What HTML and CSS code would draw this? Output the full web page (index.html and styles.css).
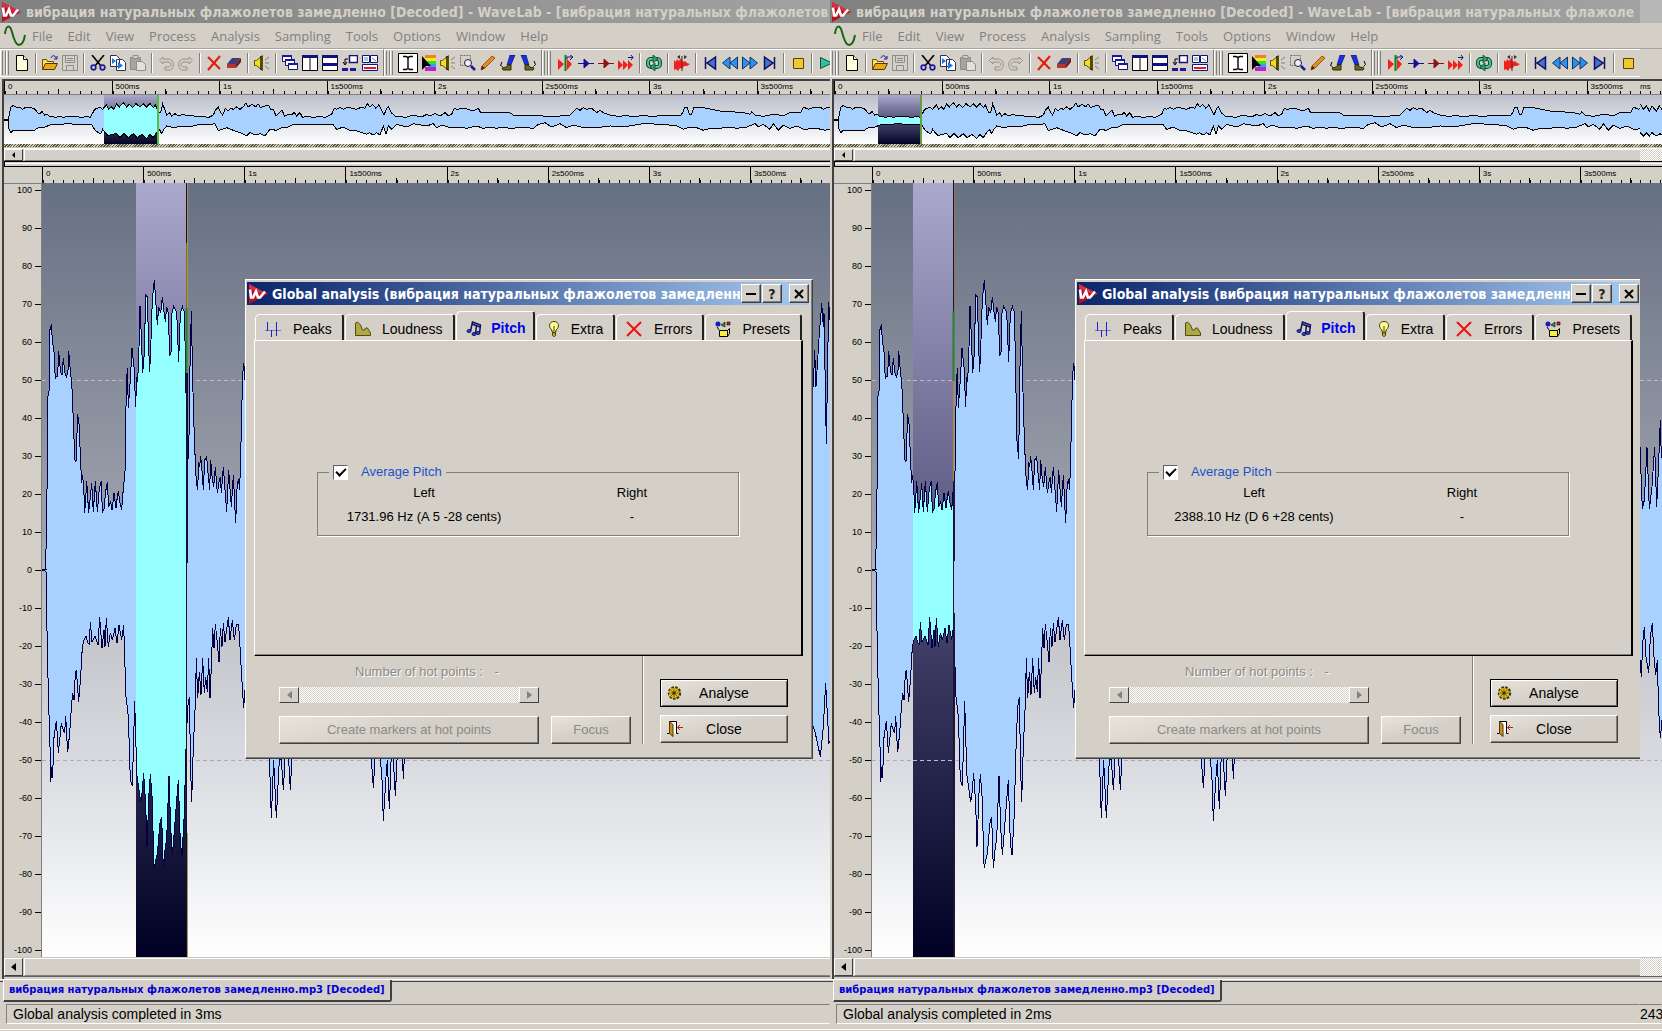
FILE: index.html
```html
<!DOCTYPE html>
<html lang="en">
<head>
<meta charset="utf-8">
<title>WaveLab - Global analysis</title>
<link rel="stylesheet" href="styles.css">
</head>
<body>
<svg class="defs" aria-hidden="true">
  <defs>
    <symbol id="logo" viewBox="0 0 20 20"><path d="M1 0 20 10 1 20z" fill="#b81020"/><path d="M1 0 20 10 14 10 1 4z" fill="#d83040"/><path d="M2 5.500l1 8h2l3-6 2 6h2l5-6" fill="none" stroke="#fff" stroke-width="2.600"/></symbol>
    <symbol id="sine" viewBox="0 0 22 22"><path d="M1 9C2 0 6-1 8 7s4 13 7 13 5-4 6-10" fill="none" stroke="#1c6410" stroke-width="2"/></symbol>
    <symbol id="new" viewBox="0 0 16 16"><path d="M2.500.5h7l4 4v11h-11z" fill="#ffffd8" stroke="#000"/><path d="M9.500.5v4h4" fill="#fff" stroke="#000"/></symbol>
    <symbol id="open" viewBox="0 0 16 16"><path d="M.5 14.500v-10h4l1 2h6v3" fill="#ffe060" stroke="#705000"/><path d="M.5 14.500l3-6h12l-3 6z" fill="#e8a818" stroke="#503800"/><path d="M9 3c1-3 4-3 5 0m1-2v3h-3" fill="none" stroke="#1010a0"/></symbol>
    <symbol id="save" viewBox="0 0 16 16"><path d="M.5.5h15v15h-15zM3.500.5v7h9v-7M4.500 15.500v-5h7v5M5 3.500h6M5 5.500h6" fill="#d4d0c8" stroke="#8c8c88"/></symbol>
    <symbol id="cut" viewBox="0 0 16 16"><path d="M2 0l9 11M14 0L5 11" stroke="#000" stroke-width="1.600"/><circle cx="3.500" cy="12.500" r="2.300" fill="none" stroke="#1818a0" stroke-width="1.700"/><circle cx="12.500" cy="12.500" r="2.300" fill="none" stroke="#1818a0" stroke-width="1.700"/></symbol>
    <symbol id="copy" viewBox="0 0 16 16"><path d="M.5.5h6l3 3v8h-9zM6.500 4.500h6l3 3v8h-9z" fill="#fff" stroke="#303060"/><path d="M2 3l4 3-4 3zM8 7l5 3.500L8 14z" fill="#1878e0"/></symbol>
    <symbol id="paste" viewBox="0 0 16 16"><path d="M.5 2.500h10v12h-10z" fill="#a8a49c" stroke="#8c8c88"/><path d="M3 .5h5v3H3z" fill="#d4d0c8" stroke="#8c8c88"/><path d="M6.500 6.500h6l3 3v6h-9z" fill="#e4e0d8" stroke="#8c8c88"/></symbol>
    <symbol id="undo" viewBox="0 0 16 16"><path d="M5 2L1.500 5.500 5 9V7h5c4 0 4 5 0 5H7v3h4c6 0 6-11-1-11H5z" fill="#d4d0c8" stroke="#96928a"/></symbol>
    <symbol id="redo" viewBox="0 0 16 16"><path d="M11 2l3.500 3.500L11 9V7H6c-4 0-4 5 0 5h3v3H5C-1 15-1 4 6 4h5z" fill="#d4d0c8" stroke="#96928a"/></symbol>
    <symbol id="del" viewBox="0 0 16 16"><path d="M2 2l12 12M14 1L2 15" stroke="#e02010" stroke-width="2.200"/></symbol>
    <symbol id="eraser" viewBox="0 0 16 16"><path d="M1 9l5-6h9l-5 6z" fill="#404078"/><path d="M1 9h9v4H1z" fill="#b03830"/><path d="M10 9l5-6v4l-5 6z" fill="#701818"/></symbol>
    <symbol id="spk" viewBox="0 0 16 16"><path d="M.5 5.500h2l6-5v15l-6-5h-2z" fill="#f0e020" stroke="#605000"/><path d="M7 1v14" stroke="#201800" stroke-width="1.500"/><path d="M11 5l4-3M11 8h4M11 11l4 3" stroke="#808080"/></symbol>
    <symbol id="casc" viewBox="0 0 16 16"><g fill="#fff" stroke="#101080"><path d="M.5.5h9v6h-9z"/><path d="M3.500 4.500h9v6h-9z"/><path d="M6.500 8.500h9v6h-9z"/></g><path d="M0 1h10M3 5h10M6 9h10" stroke="#1818a0" stroke-width="2"/></symbol>
    <symbol id="tilev" viewBox="0 0 16 16"><path d="M.5.500h15v15h-15zM8 0v16" fill="#fff" stroke="#000"/><path d="M0 1.500h16" stroke="#101080" stroke-width="3"/></symbol>
    <symbol id="tileh" viewBox="0 0 16 16"><path d="M.5.500h15v15h-15z" fill="#fff" stroke="#000"/><path d="M0 1.500h16M0 9.500h16" stroke="#101080" stroke-width="3"/></symbol>
    <symbol id="arr" viewBox="0 0 16 16"><path d="M7.500.5h8v7h-8z" fill="#fff" stroke="#101080" stroke-width="1.500"/><path d="M0 13h6v3H0zM8 13h6v3H8z" fill="#1818a0"/><path d="M6 4H3v5M1 7l2 3 2-3" fill="none" stroke="#000"/></symbol>
    <symbol id="arr2" viewBox="0 0 16 16"><path d="M.5.500h7v7h-7zM8.500.5h7v7h-7zM.5 9.500h15v6h-15z" fill="#fff" stroke="#101080"/><path d="M2 3h4M2 5h4M10 3l4 3" stroke="#40a0a0"/><path d="M2 13h12" stroke="#e02020" stroke-width="2"/></symbol>
    <symbol id="ibeam" viewBox="0 0 20 20"><path d="M.5.500h19v19H.5z" fill="#fff" stroke="#000"/><path d="M5 3.500h3l2 1 2-1h3M10 4v12M5 16.500h3l2-1 2 1h3" fill="none" stroke="#000" stroke-width="1.400"/></symbol>
    <symbol id="rainbow" viewBox="0 0 16 16"><path d="M5 0h11v3H5z" fill="#f08020"/><path d="M5 3h11v3H5z" fill="#f0f020"/><path d="M7 6h9v3H7z" fill="#30e030"/><path d="M8 9h8v3H8z" fill="#30a0f0"/><path d="M5 12h11v4H5z" fill="#c020d0"/><path d="M2 1v14l4-4h5z" fill="#000"/></symbol>
    <symbol id="zoom" viewBox="0 0 16 16"><path d="M.5.500h10v10H.5z" fill="none" stroke="#707070" stroke-dasharray="2 1"/><circle cx="8" cy="8" r="3.500" fill="#e8f0ff" stroke="#202020"/><path d="M11 11l4 4" stroke="#1818a0" stroke-width="2.500"/></symbol>
    <symbol id="pencil" viewBox="0 0 16 16"><path d="M1 15l1-4L12 1l3 2L5 13z" fill="#e09020" stroke="#804010" stroke-width=".8"/><path d="M1 15l1-4 3 2z" fill="#402000"/></symbol>
    <symbol id="legl" viewBox="0 0 16 16"><path d="M10 0h5l-4 10H7z" fill="#1830e0" stroke="#000060" stroke-width=".6"/><path d="M2 13l4-1 2-2h3v5H3z" fill="#686818" stroke="#303000"/><path d="M2 7L.5 10.500l2 1" fill="none" stroke="#000"/></symbol>
    <symbol id="legr" viewBox="0 0 16 16"><path d="M1 0h5l3 10H5z" fill="#1830e0" stroke="#000060" stroke-width=".6"/><path d="M5 10h3l2 2 4 1-1 2H5z" fill="#686818" stroke="#303000"/><path d="M14 6l1.500 3.500-2 2" fill="none" stroke="#000"/></symbol>
    <symbol id="play1" viewBox="0 0 16 16"><path d="M0 4l6 5-6 6zM9 4l5 5-5 6z" fill="#f02020"/><path d="M7.500 0v16" stroke="#108010" stroke-width="2"/><path d="M9 4V2h5M12 0l3 2-3 3" fill="none" stroke="#101090"/></symbol>
    <symbol id="mkb" viewBox="0 0 16 16"><path d="M0 8.500h16M6 4v9l5-4.500z" fill="#101090" stroke="#101090"/></symbol>
    <symbol id="mkr" viewBox="0 0 16 16"><path d="M0 8.500h16M6 4v9l5-4.500z" fill="#901010" stroke="#901010"/></symbol>
    <symbol id="mk3" viewBox="0 0 16 16"><path d="M0 5l5 5-5 5zM5 5l5 5-5 5zM10 5l5 5-5 5z" fill="#f02020"/><path d="M10 2.500h5M13 0l2 2.500L13 5" fill="none" stroke="#101090"/></symbol>
    <symbol id="loop" viewBox="0 0 16 16"><rect x="2" y="4" width="12" height="8" rx="3" fill="none" stroke="#104830" stroke-width="4"/><rect x="2" y="4" width="12" height="8" rx="3" fill="none" stroke="#50c890" stroke-width="1.800"/><path d="M7 0l5 4-5 4zM9 8l-5 4 5 4z" fill="#30a070" stroke="#104830" stroke-width=".8"/></symbol>
    <symbol id="burst" viewBox="0 0 16 16"><path d="M0 5l2 2 1-3 2 2 2-3 2 4 2-1 2 2 3 1-3 2-3 0-2 3-2-1-2 3-2-2-2 1z" fill="#f02020"/><path d="M8 1v15" stroke="#602020"/><path d="M6 0L3 2l3 2zM10 0l3 2-3 2z" fill="#303030"/></symbol>
    <symbol id="first" viewBox="0 0 16 16"><path d="M3.500 2v12M13.500 2L5 8l8.500 6z" fill="#4870d0" stroke="#101060" stroke-width="1.500"/></symbol>
    <symbol id="rew" viewBox="0 0 16 16"><path d="M8 2L.5 8 8 14zM15.500 2L8 8l7.500 6z" fill="#3090f0" stroke="#103060"/></symbol>
    <symbol id="ffw" viewBox="0 0 16 16"><path d="M.5 2L8 8 .5 14zM8 2l7.500 6L8 14z" fill="#3090f0" stroke="#103060"/></symbol>
    <symbol id="last" viewBox="0 0 16 16"><path d="M12.500 2v12M2.500 2L11 8l-8.500 6z" fill="#4870d0" stroke="#101060" stroke-width="1.500"/></symbol>
    <symbol id="stop" viewBox="0 0 16 16"><path d="M3.500 3.500h10v10h-10z" fill="#f0c830" stroke="#604000"/></symbol>
    <symbol id="play" viewBox="0 0 16 16"><path d="M2.500 2.500L14 8 2.500 13.500z" fill="#30c0a0" stroke="#105040"/></symbol>
    <symbol id="peaks" viewBox="0 0 16 16"><path d="M0 9.500h16" stroke="#7878c8"/><path d="M2.500 1v9M6.500 9v7M11.500 1v14" fill="none" stroke="#2020d0"/></symbol>
    <symbol id="loud" viewBox="0 0 16 16"><path d="M.5 14.500V2l2-1 3 3 2 5h2l1-2h2l3 5v2.500z" fill="#b0a840" stroke="#504c10"/></symbol>
    <symbol id="notes" viewBox="0 0 16 16"><path d="M4.500 11l2-9 8 3-1 8M6 4l8 3M9.500 14l1-9" fill="none" stroke="#101060" stroke-width="1.500"/><g fill="#3050c0" stroke="#101060"><ellipse cx="3" cy="11" rx="2" ry="1.500"/><ellipse cx="8" cy="14" rx="2" ry="1.500"/><ellipse cx="12" cy="13" rx="2" ry="1.500"/></g></symbol>
    <symbol id="bulb" viewBox="0 0 16 16"><path d="M6 9C2 6 3 .5 8 .5s6 5.500 2 8.500v2H6z" fill="#ffff90" stroke="#404000"/><path d="M6.500 11.500h3v3l-1 1h-1l-1-1zM8 10V5" fill="#c0a020" stroke="#404000"/></symbol>
    <symbol id="err" viewBox="0 0 16 16"><path d="M1 1l14 14M15 1L1 15" stroke="#f01010" stroke-width="2"/></symbol>
    <symbol id="pres" viewBox="0 0 16 16"><circle cx="3" cy="3" r="2.500" fill="#1818c0"/><path d="M6 4l4-3v5z" fill="#20a040" stroke="#000" stroke-width=".6"/><path d="M12 1h3v3h-3z" fill="#e02020" stroke="#000" stroke-width=".6"/><path d="M4.500 9.500h8v6h-8z" fill="#f8f040" stroke="#000"/><path d="M4 9L2 6M12.500 9.500l2-2v5l-2 3" fill="none" stroke="#000"/></symbol>
    <symbol id="gear" viewBox="0 0 16 16"><circle cx="7.500" cy="8" r="5.500" fill="#c8a818" stroke="#403800" stroke-width="2.500" stroke-dasharray="2.500 1.200"/><circle cx="7" cy="8" r="5" fill="#d8b820"/><path d="M7 3.500v9M2.500 8h9M4 5l6 6M10 5l-6 6" stroke="#806800"/><circle cx="7" cy="8" r="1.500" fill="#302800"/></symbol>
    <symbol id="door" viewBox="0 0 16 16"><path d="M2.500 12.500V.500h7v12h2M0 12.500h3" fill="#fff" stroke="#000"/><path d="M2.500.5L6 3.500v12l-3.500-3z" fill="#c89018" stroke="#503800"/><path d="M16 6.500h-5M13 4l-2.500 2.500L13 9" fill="none" stroke="#b02010"/></symbol>

    <path id="wave-top" transform="translate(-42 -3) scale(.333333)" d="M126 1170 136 1167 139 1080 139 930 142 925 143 650 147 640 149 450 152 447 154 433 157 480 162 515 166 598 168 590 173 588 176 512 179 550 183 580 186 585 190 535 194 575 200 592 204 570 206 512 210 560 214 600 217 640 221 755 225 840 228 845 231 760 233 703 238 740 241 830 245 910 247 885 251 915 254 998 257 960 260 903 266 998 270 960 275 910 280 996 286 903 292 996 298 925 304 903 307 996 313 985 316 940 322 907 326 980 332 965 336 990 342 940 348 985 352 950 355 932 360 970 365 990 370 925 375 880 377 720 380 600 382 565 385 683 391 600 396 505 402 560 407 680 410 590 413 607 417 500 420 378 424 470 428 578 433 520 437 345 442 350 446 500 449 577 453 480 457 360 463 300 467 360 472 435 476 380 482 400 487 350 490 380 496 425 500 380 505 400 509 528 513 520 516 400 521 380 526 390 530 395 536 545 541 400 547 380 550 390 553 395 557 570 560 770 566 838 570 560 574 393 578 600 582 740 586 850 589 905 593 930 596 845 599 860 602 828 607 885 610 930 614 840 620 830 625 890 629 930 632 840 637 900 641 920 646 862 652 940 658 900 661 890 664 940 670 860 675 930 680 995 686 870 694 980 700 885 707 1030 712 905 716 900 719 930 722 830 727 620 730 550 733 560 735 600 760 620 2440 620 2444 510 2448 620 2458 460 2463 400 2465 370 2470 440 2472 400 2479 793 2486 367 2490 420 2500 420V1172H126"/>
    <path id="wave-bottom" transform="translate(-42 377) scale(.333333)" d="M126 30 136 33 139 38 141 210 145 400 150 560 152 665 156 620 158 655 161 540 169 482 175 578 180 530 184 490 190 510 194 520 197 468 203 577 209 520 215 430 218 400 222 420 226 340 229 330 236 425 242 350 247 260 252 240 258 228 264 250 268 252 271 185 276 245 285 228 294 255 299 172 306 265 312 210 315 260 319 175 325 262 331 218 337 240 345 205 351 250 357 195 365 240 371 195 375 320 378 410 385 470 391 660 397 677 401 540 404 422 408 560 410 640 413 660 422 727 426 700 431 640 437 730 441 860 447 700 451 643 457 720 461 900 463 925 466 905 472 880 480 790 485 770 490 925 496 860 500 840 507 648 512 800 517 885 524 800 530 720 535 660 541 850 546 885 553 760 557 594 563 440 568 412 572 630 575 725 580 560 586 430 589 295 593 415 598 335 603 405 608 295 613 400 617 350 622 395 626 295 630 415 634 320 638 205 642 265 646 192 651 240 657 307 661 205 666 260 670 190 675 245 685 172 690 240 697 180 703 240 709 195 716 195 720 260 725 350 731 445 735 390 807 560 814 773 821 600 829 773 838 600 844 600 850 690 856 580 865 580 871 690 877 570 1112 570 1120 683 1126 580 1140 580 1146 660 1150 782 1158 650 1162 600 1168 748 1174 580 1180 600 1186 708 1192 580 1205 580 1211 658 1213 570 1300 500 2440 500 2446 520 2461 590 2470 500 2477 370 2487 550 2490 545 2500 545V30H126"/>
    <path id="mini-top" transform="translate(-4 -94) scale(.333333)" d="M12 357 24 357 28 340 33 318 40 313 50 320 58 318 68 325 75 320 88 318 98 322 106 325 112 335 120 338 126 332 134 342 142 340 150 348 158 345 166 350 180 345 190 350 200 345 215 348 230 346 245 350 260 345 270 350 276 340 284 325 292 322 300 318 308 325 312 320 320 312 326 325 334 318 342 325 350 308 358 318 370 305 380 318 388 310 398 320 408 308 420 318 430 308 440 318 450 308 460 320 466 312 472 325 476 335 482 335 488 308 494 325 500 342 508 335 515 345 525 338 535 345 550 340 560 345 575 342 590 348 610 345 625 350 640 342 648 325 655 318 662 335 668 342 676 322 684 330 692 322 700 325 710 318 720 325 732 315 738 305 744 318 756 310 768 318 774 308 782 320 795 315 806 312 812 325 820 325 828 345 838 335 846 328 854 345 866 340 876 342 882 333 890 345 900 335 908 350 920 345 940 350 960 345 975 350 995 340 1003 322 1010 325 1020 320 1030 325 1045 318 1055 322 1070 325 1085 318 1095 322 1102 308 1110 318 1118 310 1128 322 1136 312 1144 325 1152 342 1160 322 1166 318 1174 335 1188 348 1200 345 1215 350 1230 345 1250 345 1265 348 1280 340 1290 345 1305 338 1320 345 1335 335 1345 345 1355 340 1363 322 1372 325 1390 322 1405 325 1420 330 1435 322 1442 335 1470 335 1500 333 1530 336 1545 345 1570 342 1600 345 1630 345 1660 348 1680 345 1710 342 1722 330 1730 322 1740 328 1750 320 1760 325 1775 322 1790 335 1800 328 1810 335 1830 342 1855 346 1880 344 1905 348 1930 342 1955 347 1980 344 2010 342 2040 345 2048 335 2055 318 2062 320 2068 340 2075 340 2082 318 2110 320 2130 324 2160 330 2190 332 2230 335 2250 340 2255 332 2265 342 2290 346 2310 342 2330 340 2350 345 2370 335 2390 336 2402 335 2410 318 2425 325 2440 320 2460 318 2470 325 2485 318 2500 320V358H12"/>
    <path id="mini-bottom" transform="translate(-4 -94) scale(.333333)" d="M12 357 24 358 27 385 33 395 40 388 60 390 80 388 100 390 115 380 130 380 150 372 170 372 200 368 230 370 260 372 275 370 285 388 295 395 302 398 308 385 315 395 325 405 335 400 350 398 360 410 372 398 385 410 400 398 412 410 425 400 440 412 450 400 460 410 470 395 478 385 485 398 492 385 500 375 520 380 545 375 570 378 590 372 620 372 645 368 655 390 665 385 680 380 700 388 720 395 740 405 750 395 765 402 780 398 795 405 810 385 830 388 850 378 860 380 880 370 920 372 960 370 1000 372 1010 385 1030 378 1050 388 1070 390 1100 400 1108 395 1120 402 1130 395 1140 402 1150 375 1158 400 1165 375 1175 385 1190 370 1220 378 1240 368 1280 375 1300 368 1310 380 1325 372 1350 380 1375 378 1400 382 1430 375 1450 382 1470 378 1490 382 1510 378 1535 383 1560 378 1580 380 1600 382 1615 370 1635 365 1655 378 1680 368 1700 380 1720 372 1750 380 1790 380 1830 375 1880 376 1930 368 1990 370 2030 375 2050 385 2070 378 2090 380 2110 388 2130 382 2160 382 2190 378 2210 382 2240 378 2265 368 2275 378 2290 370 2310 385 2320 368 2335 388 2350 372 2370 382 2390 375 2410 385 2450 382 2475 388 2490 384 2500 384V357H12"/>
    <g id="wave"><use href="#wave-top"/><use href="#wave-bottom"/><path class="core" d="M5 380h800v14H5z"/></g>
    <g id="mini"><use href="#mini-top"/><use href="#mini-bottom"/><path class="core" d="M5 23h840v4H5z"/></g>
    <linearGradient id="selection" x2="0" y2="1"><stop stop-color="#aba8cd"/><stop offset=".4" stop-color="#64618a"/><stop offset=".58" stop-color="#424068"/><stop offset="1" stop-color="#000024"/></linearGradient>
    <clipPath id="sel-a"><path d="M94 0h50v774H94z"/></clipPath>
    <clipPath id="sel-b"><path d="M41 0h40v774H41z"/></clipPath>
    <clipPath id="msel-a"><path d="M100 0h53v50h-53z"/></clipPath>
    <clipPath id="msel-b"><path d="M44 0h42v50H44z"/></clipPath>
  </defs>
</svg>

<main class="screen">
<section class="app">
  <header class="caption"><svg class="logo"><use href="#logo"/></svg><h1>вибрация натуральных флажолетов замедленно [Decoded] - WaveLab - [вибрация натуральных флажолетов</h1></header>
  <nav class="menu"><svg class="sine"><use href="#sine"/></svg><button>File</button><button>Edit</button><button>View</button><button>Process</button><button>Analysis</button><button>Sampling</button><button>Tools</button><button>Options</button><button>Window</button><button>Help</button></nav>
  <div class="toolbar">
    <div class="band"><i class="grip"></i><button aria-label="New"><svg><use href="#new"/></svg></button><i class="sep"></i><button aria-label="Open"><svg><use href="#open"/></svg></button><button aria-label="Save"><svg><use href="#save"/></svg></button><i class="sep"></i><button aria-label="Cut"><svg><use href="#cut"/></svg></button><button aria-label="Copy"><svg><use href="#copy"/></svg></button><button aria-label="Paste"><svg><use href="#paste"/></svg></button><i class="sep"></i><button aria-label="Undo"><svg><use href="#undo"/></svg></button><button aria-label="Redo"><svg><use href="#redo"/></svg></button><i class="sep"></i><button aria-label="Delete"><svg><use href="#del"/></svg></button><button aria-label="Erase"><svg><use href="#eraser"/></svg></button><i class="sep"></i><button aria-label="Monitor"><svg><use href="#spk"/></svg></button><i class="sep"></i><button aria-label="Cascade"><svg><use href="#casc"/></svg></button><button aria-label="Tile vertically"><svg><use href="#tilev"/></svg></button><button aria-label="Tile horizontally"><svg><use href="#tileh"/></svg></button><button aria-label="Arrange"><svg><use href="#arr"/></svg></button><button aria-label="Layout"><svg><use href="#arr2"/></svg></button></div>
    <div class="band"><i class="grip"></i><button class="down" aria-label="Select"><svg><use href="#ibeam"/></svg></button><button aria-label="Colour"><svg><use href="#rainbow"/></svg></button><button aria-label="Listen"><svg><use href="#spk"/></svg></button><button aria-label="Zoom"><svg><use href="#zoom"/></svg></button><button aria-label="Pencil"><svg><use href="#pencil"/></svg></button><button aria-label="Step left"><svg><use href="#legl"/></svg></button><button aria-label="Step right"><svg><use href="#legr"/></svg></button></div>
    <div class="band"><i class="grip"></i><button aria-label="Play from"><svg><use href="#play1"/></svg></button><button aria-label="Blue marker"><svg><use href="#mkb"/></svg></button><button aria-label="Red marker"><svg><use href="#mkr"/></svg></button><button aria-label="Skip"><svg><use href="#mk3"/></svg></button><i class="sep"></i><button aria-label="Loop"><svg><use href="#loop"/></svg></button><i class="sep"></i><button aria-label="Scrub"><svg><use href="#burst"/></svg></button><i class="sep"></i><button aria-label="Start"><svg><use href="#first"/></svg></button><button aria-label="Rewind"><svg><use href="#rew"/></svg></button><button aria-label="Forward"><svg><use href="#ffw"/></svg></button><button aria-label="End"><svg><use href="#last"/></svg></button><i class="sep"></i><button aria-label="Stop"><svg><use href="#stop"/></svg></button><i class="sep"></i><button aria-label="Play"><svg><use href="#play"/></svg></button></div>
  </div>
  <div class="document">
    <div class="ruler ruler-mini"><span>0</span><span>500ms</span><span>1s</span><span>1s500ms</span><span>2s</span><span>2s500ms</span><span>3s</span><span>3s500ms</span></div>
    <svg class="overview"><use href="#mini" class="plain"/><rect x="100" width="53" height="50" fill="url(#selection)"/><g clip-path="url(#msel-a)"><use href="#mini" class="picked"/></g><path d="M154 0v50" stroke="#50c040" stroke-width="2"/></svg>
    <div class="hatch"></div>
    <div class="scroll scroll-mini"><button aria-label="Scroll left"></button><i class="thumb"></i></div>
    <div class="splitter"></div>
    <div class="ruler ruler-main"><span>0</span><span>500ms</span><span>1s</span><span>1s500ms</span><span>2s</span><span>2s500ms</span><span>3s</span><span>3s500ms</span></div>
    <div class="editor">
      <ol class="levels"><li>100</li><li>90</li><li>80</li><li>70</li><li>60</li><li>50</li><li>40</li><li>30</li><li>20</li><li>10</li><li>0</li><li>-10</li><li>-20</li><li>-30</li><li>-40</li><li>-50</li><li>-60</li><li>-70</li><li>-80</li><li>-90</li><li>-100</li></ol>
      <div class="canvas">
        <svg class="plot"><path class="dash" d="M0 197.500h800"/><path class="dash low" d="M0 577.500h800"/><use href="#wave" class="plain"/><rect x="94" width="50" height="774" fill="url(#selection)"/><g clip-path="url(#sel-a)"><use href="#wave" class="picked"/></g><path d="M144.500 0v774" stroke="#101030"/><path d="M145.500 0v125M145.500 650v124" stroke="#a89858"/><path d="M144.500 60v65" stroke="#807010"/><path d="M144.500 125v65" stroke="#288028" stroke-width="2"/><path d="M145.500 190v190" stroke="#101030"/></svg>
        <section class="dialog" aria-label="Global analysis">
          <header><svg class="logo"><use href="#logo"/></svg><h2>Global analysis (вибрация натуральных флажолетов замедленно)</h2><button aria-label="Minimise"><svg viewBox="0 0 12 12"><path d="M1 6h10" stroke="#000" stroke-width="2"/></svg></button><button class="help">?</button><button class="x" aria-label="Close window"><svg viewBox="0 0 12 12"><path d="M2 2l8 8M10 2l-8 8" stroke="#000" stroke-width="2"/></svg></button></header>
          <div class="tabs"><button class="t1"><svg><use href="#peaks"/></svg>Peaks</button><button class="t2"><svg><use href="#loud"/></svg>Loudness</button><button class="t3 active"><svg><use href="#notes"/></svg>Pitch</button><button class="t4"><svg><use href="#bulb"/></svg>Extra</button><button class="t5"><svg><use href="#err"/></svg>Errors</button><button class="t6"><svg><use href="#pres"/></svg>Presets</button></div>
          <div class="sheet">
            <fieldset><legend><input type="checkbox" id="avg-a" checked><label for="avg-a">Average Pitch</label></legend>
              <table><tr><th>Left</th><th>Right</th></tr><tr><td>1731.96 Hz (A 5 -28 cents)</td><td>-</td></tr></table>
            </fieldset>
          </div>
          <footer>
            <div class="hot"><p>Number of hot points : <span>-</span></p><div class="hscroll"><button disabled aria-label="Previous"></button><i></i><button disabled class="next" aria-label="Next"></button></div><div class="row"><button class="push create" disabled>Create markers at hot points</button><button class="push focus" disabled>Focus</button></div></div>
            <div class="actions"><button class="push main"><svg><use href="#gear"/></svg><span>Analyse</span></button><button class="push"><svg><use href="#door"/></svg><span>Close</span></button></div>
          </footer>
        </section>
      </div>
    </div>
    <div class="scroll scroll-main"><button aria-label="Scroll left"></button><i class="thumb"></i></div>
  </div>
  <div class="files"><button>вибрация натуральных флажолетов замедленно.mp3 [Decoded]</button></div>
  <footer class="status"><p>Global analysis completed in 3ms</p></footer>
</section>

<section class="app">
  <header class="caption"><svg class="logo"><use href="#logo"/></svg><h1>вибрация натуральных флажолетов замедленно [Decoded] - WaveLab - [вибрация натуральных флажоле</h1></header>
  <nav class="menu"><svg class="sine"><use href="#sine"/></svg><button>File</button><button>Edit</button><button>View</button><button>Process</button><button>Analysis</button><button>Sampling</button><button>Tools</button><button>Options</button><button>Window</button><button>Help</button></nav>
  <div class="toolbar">
    <div class="band"><i class="grip"></i><button aria-label="New"><svg><use href="#new"/></svg></button><i class="sep"></i><button aria-label="Open"><svg><use href="#open"/></svg></button><button aria-label="Save"><svg><use href="#save"/></svg></button><i class="sep"></i><button aria-label="Cut"><svg><use href="#cut"/></svg></button><button aria-label="Copy"><svg><use href="#copy"/></svg></button><button aria-label="Paste"><svg><use href="#paste"/></svg></button><i class="sep"></i><button aria-label="Undo"><svg><use href="#undo"/></svg></button><button aria-label="Redo"><svg><use href="#redo"/></svg></button><i class="sep"></i><button aria-label="Delete"><svg><use href="#del"/></svg></button><button aria-label="Erase"><svg><use href="#eraser"/></svg></button><i class="sep"></i><button aria-label="Monitor"><svg><use href="#spk"/></svg></button><i class="sep"></i><button aria-label="Cascade"><svg><use href="#casc"/></svg></button><button aria-label="Tile vertically"><svg><use href="#tilev"/></svg></button><button aria-label="Tile horizontally"><svg><use href="#tileh"/></svg></button><button aria-label="Arrange"><svg><use href="#arr"/></svg></button><button aria-label="Layout"><svg><use href="#arr2"/></svg></button></div>
    <div class="band"><i class="grip"></i><button class="down" aria-label="Select"><svg><use href="#ibeam"/></svg></button><button aria-label="Colour"><svg><use href="#rainbow"/></svg></button><button aria-label="Listen"><svg><use href="#spk"/></svg></button><button aria-label="Zoom"><svg><use href="#zoom"/></svg></button><button aria-label="Pencil"><svg><use href="#pencil"/></svg></button><button aria-label="Step left"><svg><use href="#legl"/></svg></button><button aria-label="Step right"><svg><use href="#legr"/></svg></button></div>
    <div class="band"><i class="grip"></i><button aria-label="Play from"><svg><use href="#play1"/></svg></button><button aria-label="Blue marker"><svg><use href="#mkb"/></svg></button><button aria-label="Red marker"><svg><use href="#mkr"/></svg></button><button aria-label="Skip"><svg><use href="#mk3"/></svg></button><i class="sep"></i><button aria-label="Loop"><svg><use href="#loop"/></svg></button><i class="sep"></i><button aria-label="Scrub"><svg><use href="#burst"/></svg></button><i class="sep"></i><button aria-label="Start"><svg><use href="#first"/></svg></button><button aria-label="Rewind"><svg><use href="#rew"/></svg></button><button aria-label="Forward"><svg><use href="#ffw"/></svg></button><button aria-label="End"><svg><use href="#last"/></svg></button><i class="sep"></i><button aria-label="Stop"><svg><use href="#stop"/></svg></button></div>
  </div>
  <div class="document">
    <div class="ruler ruler-mini"><span>0</span><span>500ms</span><span>1s</span><span>1s500ms</span><span>2s</span><span>2s500ms</span><span>3s</span><span>3s500ms</span></div>
    <svg class="overview"><use href="#mini" class="plain"/><rect x="44" width="42" height="50" fill="url(#selection)"/><g clip-path="url(#msel-b)"><use href="#mini" class="picked"/></g><path d="M87 0v50" stroke="#60a040" stroke-width="2"/></svg>
    <div class="hatch"></div>
    <div class="scroll scroll-mini"><button aria-label="Scroll left"></button><i class="thumb"></i></div>
    <div class="splitter"></div>
    <div class="ruler ruler-main"><span>0</span><span>500ms</span><span>1s</span><span>1s500ms</span><span>2s</span><span>2s500ms</span><span>3s</span><span>3s500ms</span></div>
    <div class="editor">
      <ol class="levels"><li>100</li><li>90</li><li>80</li><li>70</li><li>60</li><li>50</li><li>40</li><li>30</li><li>20</li><li>10</li><li>0</li><li>-10</li><li>-20</li><li>-30</li><li>-40</li><li>-50</li><li>-60</li><li>-70</li><li>-80</li><li>-90</li><li>-100</li></ol>
      <div class="canvas">
        <svg class="plot"><path class="dash" d="M0 197.500h800"/><path class="dash low" d="M0 577.500h800"/><use href="#wave" class="plain"/><rect x="41" width="40" height="774" fill="url(#selection)"/><path class="dash" d="M41 197.500h40M41 577.500h40"/><g clip-path="url(#sel-b)"><use href="#wave" class="picked"/></g><path d="M81.500 0v774" stroke="#101838"/><path d="M82.500 0v128" stroke="#a87048"/><path d="M81.500 128v70" stroke="#288028" stroke-width="2"/><path d="M81.500 198v100" stroke="#c08838"/><path d="M82.500 298v80M82.500 430v344" stroke="#301038"/></svg>
        <section class="dialog" aria-label="Global analysis">
          <header><svg class="logo"><use href="#logo"/></svg><h2>Global analysis (вибрация натуральных флажолетов замедленно)</h2><button aria-label="Minimise"><svg viewBox="0 0 12 12"><path d="M1 6h10" stroke="#000" stroke-width="2"/></svg></button><button class="help">?</button><button class="x" aria-label="Close window"><svg viewBox="0 0 12 12"><path d="M2 2l8 8M10 2l-8 8" stroke="#000" stroke-width="2"/></svg></button></header>
          <div class="tabs"><button class="t1"><svg><use href="#peaks"/></svg>Peaks</button><button class="t2"><svg><use href="#loud"/></svg>Loudness</button><button class="t3 active"><svg><use href="#notes"/></svg>Pitch</button><button class="t4"><svg><use href="#bulb"/></svg>Extra</button><button class="t5"><svg><use href="#err"/></svg>Errors</button><button class="t6"><svg><use href="#pres"/></svg>Presets</button></div>
          <div class="sheet">
            <fieldset><legend><input type="checkbox" id="avg-b" checked><label for="avg-b">Average Pitch</label></legend>
              <table><tr><th>Left</th><th>Right</th></tr><tr><td>2388.10 Hz (D 6 +28 cents)</td><td>-</td></tr></table>
            </fieldset>
          </div>
          <footer>
            <div class="hot"><p>Number of hot points : <span>-</span></p><div class="hscroll"><button disabled aria-label="Previous"></button><i></i><button disabled class="next" aria-label="Next"></button></div><div class="row"><button class="push create" disabled>Create markers at hot points</button><button class="push focus" disabled>Focus</button></div></div>
            <div class="actions"><button class="push main"><svg><use href="#gear"/></svg><span>Analyse</span></button><button class="push"><svg><use href="#door"/></svg><span>Close</span></button></div>
          </footer>
        </section>
      </div>
    </div>
    <div class="scroll scroll-main"><button aria-label="Scroll left"></button><i class="thumb"></i></div>
  </div>
  <div class="files"><button>вибрация натуральных флажолетов замедленно.mp3 [Decoded]</button></div>
  <footer class="status"><p>Global analysis completed in 2ms</p></footer>
</section>

<section class="app edge">
  <header class="caption"></header>
  <div class="menu"></div>
  <div class="toolbar"></div>
  <div class="document">
    <div class="ruler ruler-mini"><span>ms</span></div>
    <svg class="overview"><path class="plain" transform="translate(0 -94) scale(.333333)" d="M-3 308 0 308 10 325 20 315 28 330 36 315 44 325 50 330 58 315 70 330V405L60 398 48 405 36 395 28 405 20 395 10 405 0 395-3 395"/></svg>
    <div class="hatch"></div>
    <div class="scroll scroll-mini"><i class="track"></i></div>
    <div class="splitter"></div>
    <div class="ruler ruler-main"><span></span></div>
    <div class="editor"><div class="canvas"><svg class="plot"><path class="dash" d="M0 197.500h30"/><path class="dash low" d="M0 577.500h30"/><path class="plain" transform="translate(0 -3) scale(.333333)" d="M-3 800 0 800 7 988 13 960 21 802 28 988 36 920 44 800 50 980 55 870 61 720 64 835 70 740V1620L66 1620 61 1675 56 1590 52 1440 47 1485 42 1430 37 1330 31 1370 26 1480 18 1430 13 1340 8 1390 4 1490 0 1440-3 1440"/></svg></div></div>
    <div class="scroll scroll-main"><i class="track"></i></div>
  </div>
  <div class="files"></div>
  <footer class="status"><p>243</p></footer>
</section>
</main>
</body>
</html>
```
FILE: styles.css
```css
:root {
  --face: #d4d0c8;
  --shade: #808080;
  --dark: #404040;
  --ui: "Liberation Sans", Arial, sans-serif;
  --caption: "DejaVu Sans Condensed", "DejaVu Sans", sans-serif;
}
* { box-sizing: border-box; }
body { margin: 0; background: var(--face); font: 14px/16px var(--ui); color: #000; }
button { font: inherit; color: inherit; margin: 0; padding: 0; border: 0; background: none; white-space: nowrap; }
h1, h2, p, ol { margin: 0; padding: 0; }
svg { display: block; flex: none; }
.defs { position: absolute; width: 0; height: 0; }

.screen { display: grid; grid-template-columns: 830fr 810fr 22fr; min-height: 100vh; overflow: hidden; }
.app { display: flex; flex-direction: column; min-width: 0; overflow: hidden; background: var(--face); }

.caption { display: flex; align-items: center; gap: 5px; height: 23px; flex: none; background: linear-gradient(90deg, #808080, #a2a2a2); overflow: hidden; }
.logo { width: 20px; height: 20px; margin-left: 1px; }
.caption h1 { font: bold 14px/22px var(--caption); color: var(--face); white-space: nowrap; }
.menu { display: flex; align-items: center; gap: 15px; height: 25px; flex: none; padding-left: 4px; overflow: hidden; color: #808080; }
.menu button { font: 13px/20px "Open Sans", "Noto Sans", sans-serif; }
.sine { width: 22px; height: 22px; margin-right: -9px; }

.toolbar { display: flex; height: 29px; flex: none; border-top: 1px solid #a8a49c; border-bottom: 1px solid #fff; overflow: hidden; }
.band { display: flex; align-items: center; flex: none; border-top: 1px solid #fff; border-left: 1px solid #fff; border-right: 1px solid #808080; padding-right: 3px; }
.band:last-child { border-right: 0; }
.band button { display: grid; place-items: center; width: 20px; height: 20px; }
.band svg { width: 16px; height: 16px; }
.band .down svg { width: 20px; height: 20px; }
.grip { width: 7px; height: 24px; margin: 0 3px 0 1px; border: solid; border-width: 0 1px; border-color: #fff #808080; background: linear-gradient(90deg, transparent 2px, #808080 2px 3px, #fff 3px 4px, transparent 4px); }
.band + .band .grip { margin-right: 5px; }
.sep { width: 8px; height: 20px; background: linear-gradient(90deg, transparent 3px, #808080 3px 4px, #fff 4px 5px, transparent 5px); }

.document { display: flex; flex-direction: column; flex: 1; margin: 2px 0 0 2px; border-top: 2px solid var(--dark); border-left: 2px solid var(--dark); min-width: 0; overflow: hidden; }
.ruler { display: grid; grid-template-columns: repeat(8, 1fr); flex: none; font: 8px/9px var(--ui); }
.ruler span { padding: 1px 0 0 3px; border-left: 1px solid #000; background: repeating-linear-gradient(90deg, #000 0 1px, transparent 1px 10%) 0 100% / 100% 3px no-repeat, linear-gradient(#000, #000) 50% 100% / 1px 5px no-repeat; white-space: nowrap; }
.ruler-mini { width: 860px; height: 13px; }
.ruler-main { width: 809px; height: 16px; margin-left: 38px; }
.ruler-main span { padding-top: 2px; }
.overview { width: 100%; height: 50px; background: linear-gradient(#bcbfcb, #fff); border-top: 1px solid #808080; }
.plain { fill: #a9d1ff; }
.picked { fill: #96ffff; }
.overview .plain, .overview .picked { stroke: #000; }
.plot .plain, .plot .picked { stroke: #000044; }
#wave-top, #wave-bottom, #mini-top, #mini-bottom, path.plain { vector-effect: non-scaling-stroke; shape-rendering: crispEdges; }
.core { stroke: none; }
.hatch { height: 4px; flex: none; background: repeating-linear-gradient(135deg, #56563c 0 1px, #d0d0b8 1px 2px); border-bottom: 1px solid #c8c4bc; }
.scroll { display: flex; flex: none; }
.scroll button { width: 19px; border: 1px solid; border-color: #fff #404040 #404040 #fff; display: grid; place-items: center; }
.scroll button::before { content: ""; border: 4px solid transparent; border-right: 5px solid #000; border-left: 0; }
.scroll-mini { height: 13px; border-top: 1px solid #fff; }
.scroll-mini button::before { border-width: 3px 3px 3px 0; }
.scroll-main { height: 20px; border-top: 1px solid #c8c4bc; border-bottom: 1px solid #606060; }
.thumb { flex: 1; margin-left: 1px; border-top: 1px solid #fff; border-left: 1px solid #fff; border-bottom: 1px solid #808080; }
.track, .hscroll i { flex: 1; background: repeating-conic-gradient(#fff 0 25%, #d4d0c8 0 50%) 0 0 / 2px 2px; }
.splitter { height: 6px; flex: none; border: solid #000; border-width: 1px 0 1px 1px; background: linear-gradient(#d4d0c8 1px, #fff 1px 2px, #d4d0c8 2px); }

.editor { display: flex; height: 774px; flex: none; }
.levels { display: flex; flex-direction: column; justify-content: center; width: 38px; list-style: none; overflow: hidden; border-top: 1px solid #808080; border-right: 1px solid #808080; font: 9px/9px var(--ui); }
.levels li { display: flex; align-items: center; justify-content: flex-end; gap: 3px; height: 38px; flex: none; }
.levels li::after { content: ""; width: 6px; height: 1px; background: #000; }
.canvas { position: relative; flex: 1; min-width: 0; background: linear-gradient(#667083, #9fa2ad 45%, #b4b5bc 50%, #c4c5ca 58%, #d9dbe0 75%, #fff); overflow: hidden; }
.plot { width: 100%; height: 774px; }
.dash { fill: none; stroke: #b8bcc4; stroke-dasharray: 4 3; }
.low { stroke: #aaacb0; }

.dialog { position: absolute; left: 203px; top: 96px; width: 568px; height: 480px; display: flex; flex-direction: column; padding: 1px; border: 1px solid; border-color: #fff #404040 #404040 #fff; background: var(--face); box-shadow: inset -1px -1px #808080; }
.dialog > header { display: flex; align-items: center; height: 23px; margin: 1px 2px 0 0; flex: none; background: linear-gradient(90deg, #0a246a, #a6caf0); color: #fff; }
.dialog h2 { flex: 1; min-width: 0; margin-left: 4px; overflow: hidden; font: bold 14px/22px var(--caption); white-space: nowrap; }
.dialog header button { display: grid; place-items: center; width: 20px; height: 19px; margin-right: 1px; border: 1px solid; border-color: #fff #404040 #404040 #fff; background: var(--face); color: #222; box-shadow: inset -1px -1px #808080; }
.dialog header button svg { width: 12px; height: 12px; }
.dialog header .help { font: bold 14px/16px var(--caption); }
.dialog header .x { margin: 0 0 0 6px; }

.tabs { display: flex; align-items: flex-end; height: 35px; margin: 0 8px; flex: none; }
.tabs button { display: flex; align-items: center; justify-content: space-between; height: 26px; padding: 3px 10px 0 9px; margin-right: 1px; border: solid; border-width: 1px 2px 0 1px; border-color: #fff #202020 #fff #fff; border-radius: 5px 3px 0 0; }
.tabs svg { width: 16px; height: 16px; }
.tabs .active { height: 29px; padding-right: 8px; font-weight: bold; color: #0000f0; }
.t1 { width: 89px; } .t2 { width: 110px; } .t3 { width: 80px; } .t4 { width: 79px; } .t5 { width: 88px; } .t6 { width: 97px; }
.sheet { flex: none; height: 316px; margin: 0 8px 0 7px; border: 1px solid; border-color: #fff #000 #000 #fff; border-right-width: 2px; box-shadow: inset 0 -1px #808080; padding: 123px 62px 0; }
fieldset { margin: 0; height: 72px; padding: 0 0 0 2px; border: 1px solid #808080; box-shadow: 1px 1px #fff; min-width: 0; }
legend { display: flex; align-items: center; gap: 13px; margin-left: 9px; padding: 0 4px; font-size: 13px; color: #2050c8; }
legend input { appearance: none; width: 15px; height: 15px; margin: 0; border: 1px solid; border-color: #606060 #fff #fff #606060; background: #fff; display: grid; place-items: center; }
legend input::after { content: ""; width: 8px; height: 4px; border: solid #000; border-width: 0 0 2px 2px; transform: rotate(-45deg); margin-bottom: 2px; }
table { width: 416px; table-layout: fixed; border-collapse: collapse; font-size: 13px; text-align: center; margin-top: 1px; }
th, td { padding: 4px 0; font-weight: normal; line-height: 16px; }

.dialog footer { display: flex; flex: 1; padding: 0 0 13px 32px; }
.hot { width: 364px; padding-top: 8px; border-right: 1px solid #808080; box-shadow: 1px 0 #fff; color: #8a8a86; text-shadow: 1px 1px #fff; font-size: 13px; }
.hot p { padding-left: 76px; height: 23px; line-height: 16px; }
.hot p span { padding-left: 8px; }
.hscroll { display: flex; width: 260px; height: 16px; }
.hscroll button { display: grid; place-items: center; width: 20px; border: 1px solid; border-color: #fff #404040 #404040 #fff; background: var(--face); }
.hscroll button::before { content: ""; border: solid transparent; border-width: 4px 5px 4px 0; border-right-color: #808080; }
.hscroll .next::before { border-width: 4px 0 4px 5px; border-left-color: #808080; }
.row { display: flex; gap: 12px; margin-top: 13px; }
.push { display: flex; align-items: center; height: 28px; border: 1px solid; border-color: #fff #404040 #404040 #fff; background: linear-gradient(165deg, #e8e4da, #d4d0c8 50%); box-shadow: inset -1px -1px #808080; }
.create { justify-content: center; width: 260px; }
.focus { justify-content: center; width: 80px; }
.actions { display: flex; flex-direction: column; gap: 8px; padding: 23px 0 0 17px; }
.actions .push { width: 128px; padding: 0 6px; }
.actions .main { border-color: #000; box-shadow: inset 1px 1px #fff, inset -1px -1px #606060; }
.actions svg { width: 16px; height: 16px; }
.actions span { flex: 1; padding-right: 16px; }

.files { height: 25px; flex: none; border-top: 1px solid #fff; padding-left: 3px; background: linear-gradient(#404040, #404040) 0 1px / 100% 1px no-repeat; }
.files button { height: 22px; padding: 0 5px; border: solid; border-width: 0 2px 2px 1px; border-color: #fff #404040 #404040 #fff; border-radius: 0 0 3px 1px; background: var(--face); font: bold 10px/20px "DejaVu Sans", sans-serif; color: #0000d8; }
.status { flex: none; height: 26px; border-bottom: 1px solid #fff; margin-bottom: 1px; }
.status p { height: 20px; margin-left: 6px; padding-left: 6px; border: 1px solid; border-color: #808080 transparent #fff #808080; line-height: 18px; white-space: nowrap; }

.edge .caption { background: #b8b8b8; }
.edge .toolbar { border-bottom-color: transparent; }
.edge .document { margin-left: 0; border-left: 0; }
.edge .ruler { width: 101px; margin: 0; display: block; }
.edge .ruler span { display: block; height: 100%; border: 0; padding-left: 0; }
.edge .splitter { border-left: 0; }
.edge .files { padding: 0; }
.edge .status p { margin: 0; padding: 0; border-left: 0; }
```
